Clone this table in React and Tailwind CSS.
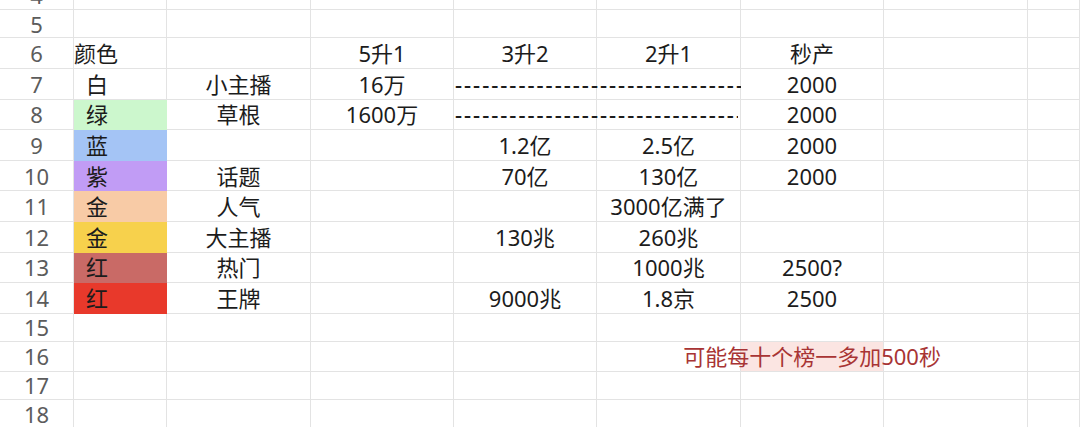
const cols = 'grid grid-cols-[74px_93px_144px_143px_143px_144px_143px_144px_1fr]'
const line = 'border-r border-b border-[#e3e3e3]'

const swatch = {
  green: 'bg-[#ccf7cd]',
  blue: 'bg-[#a4c4f5]',
  purple: 'bg-[#c19cf5]',
  peach: 'bg-[#f8cba6]',
  yellow: 'bg-[#f7d14c]',
  rose: 'bg-[#c96a66]',
  red: 'bg-[#e8392b]',
}

const DASHES = '-'.repeat(50)

function Dash({ width }) {
  return (
    <span className={`inline-block shrink-0 overflow-hidden whitespace-nowrap font-medium tracking-[2px] ${width}`}>
      {DASHES}
    </span>
  )
}

const rows = [
  { n: 4, h: 'h-[30px]' },
  { n: 5, h: 'h-[28px]' },
  { n: 6, h: 'h-[31px]', a: '颜色', head: true, c: '5升1', d: '3升2', e: '2升1', f: '秒产' },
  { n: 7, h: 'h-[30.6px]', a: '白', b: '小主播', c: '16万', dash: 'w-[286px]', f: '2000' },
  { n: 8, h: 'h-[30.6px]', a: '绿', fill: swatch.green, b: '草根', c: '1600万', dash: 'w-[283px]', f: '2000' },
  { n: 9, h: 'h-[30.6px]', a: '蓝', fill: swatch.blue, d: '1.2亿', e: '2.5亿', f: '2000' },
  { n: 10, h: 'h-[30.6px]', a: '紫', fill: swatch.purple, b: '话题', d: '70亿', e: '130亿', f: '2000' },
  { n: 11, h: 'h-[30.6px]', a: '金', fill: swatch.peach, b: '人气', e: '3000亿满了' },
  { n: 12, h: 'h-[30.6px]', a: '金', fill: swatch.yellow, b: '大主播', d: '130兆', e: '260兆' },
  { n: 13, h: 'h-[30.6px]', a: '红', fill: swatch.rose, b: '热门', e: '1000兆', f: '2500?' },
  { n: 14, h: 'h-[30.6px]', a: '红', fill: swatch.red, b: '王牌', d: '9000兆', e: '1.8京', f: '2500' },
  { n: 15, h: 'h-[28px]' },
  { n: 16, h: 'h-[30px]', note: '可能每十个榜一多加500秒' },
  { n: 17, h: 'h-[28px]' },
  { n: 18, h: 'h-[30px]' },
]

function Cell({ children, className = '' }) {
  return <div className={`flex items-center justify-center whitespace-nowrap ${line} ${className}`}>{children}</div>
}

function Row({ r }) {
  return (
    <div className={`${cols} ${r.h}`}>
      <Cell className="text-[#5c5c5c]">{r.n}</Cell>
      <div
        className={`flex items-center whitespace-nowrap ${r.head ? 'pl-0' : 'pl-[12px]'} ${
          r.fill ? `${r.fill} border-r border-b border-transparent` : line
        }`}
      >
        {r.a}
      </div>
      <Cell>{r.b}</Cell>
      <Cell>{r.c}</Cell>
      {r.dash ? (
        <div className={`relative z-10 flex items-center justify-start whitespace-nowrap pl-px ${line}`}>
          <Dash width={r.dash} />
        </div>
      ) : (
        <Cell>{r.d}</Cell>
      )}
      <Cell>{r.e}</Cell>
      {r.note ? (
        <Cell className="bg-[#fbe5e2] text-[#a83434]">{r.note}</Cell>
      ) : (
        <Cell>{r.f}</Cell>
      )}
      <Cell />
      <Cell />
    </div>
  )
}

export default function App() {
  return (
    <div className="w-[1080px] h-[427px] overflow-hidden bg-white">
      <div
        className="-mt-[20px] text-[22px] leading-none text-[#1c1c1c]"
        style={{ fontFamily: '"Noto Sans", "Noto Sans CJK SC", sans-serif' }}
      >
        {rows.map((r) => (
          <Row key={r.n} r={r} />
        ))}
      </div>
    </div>
  )
}
